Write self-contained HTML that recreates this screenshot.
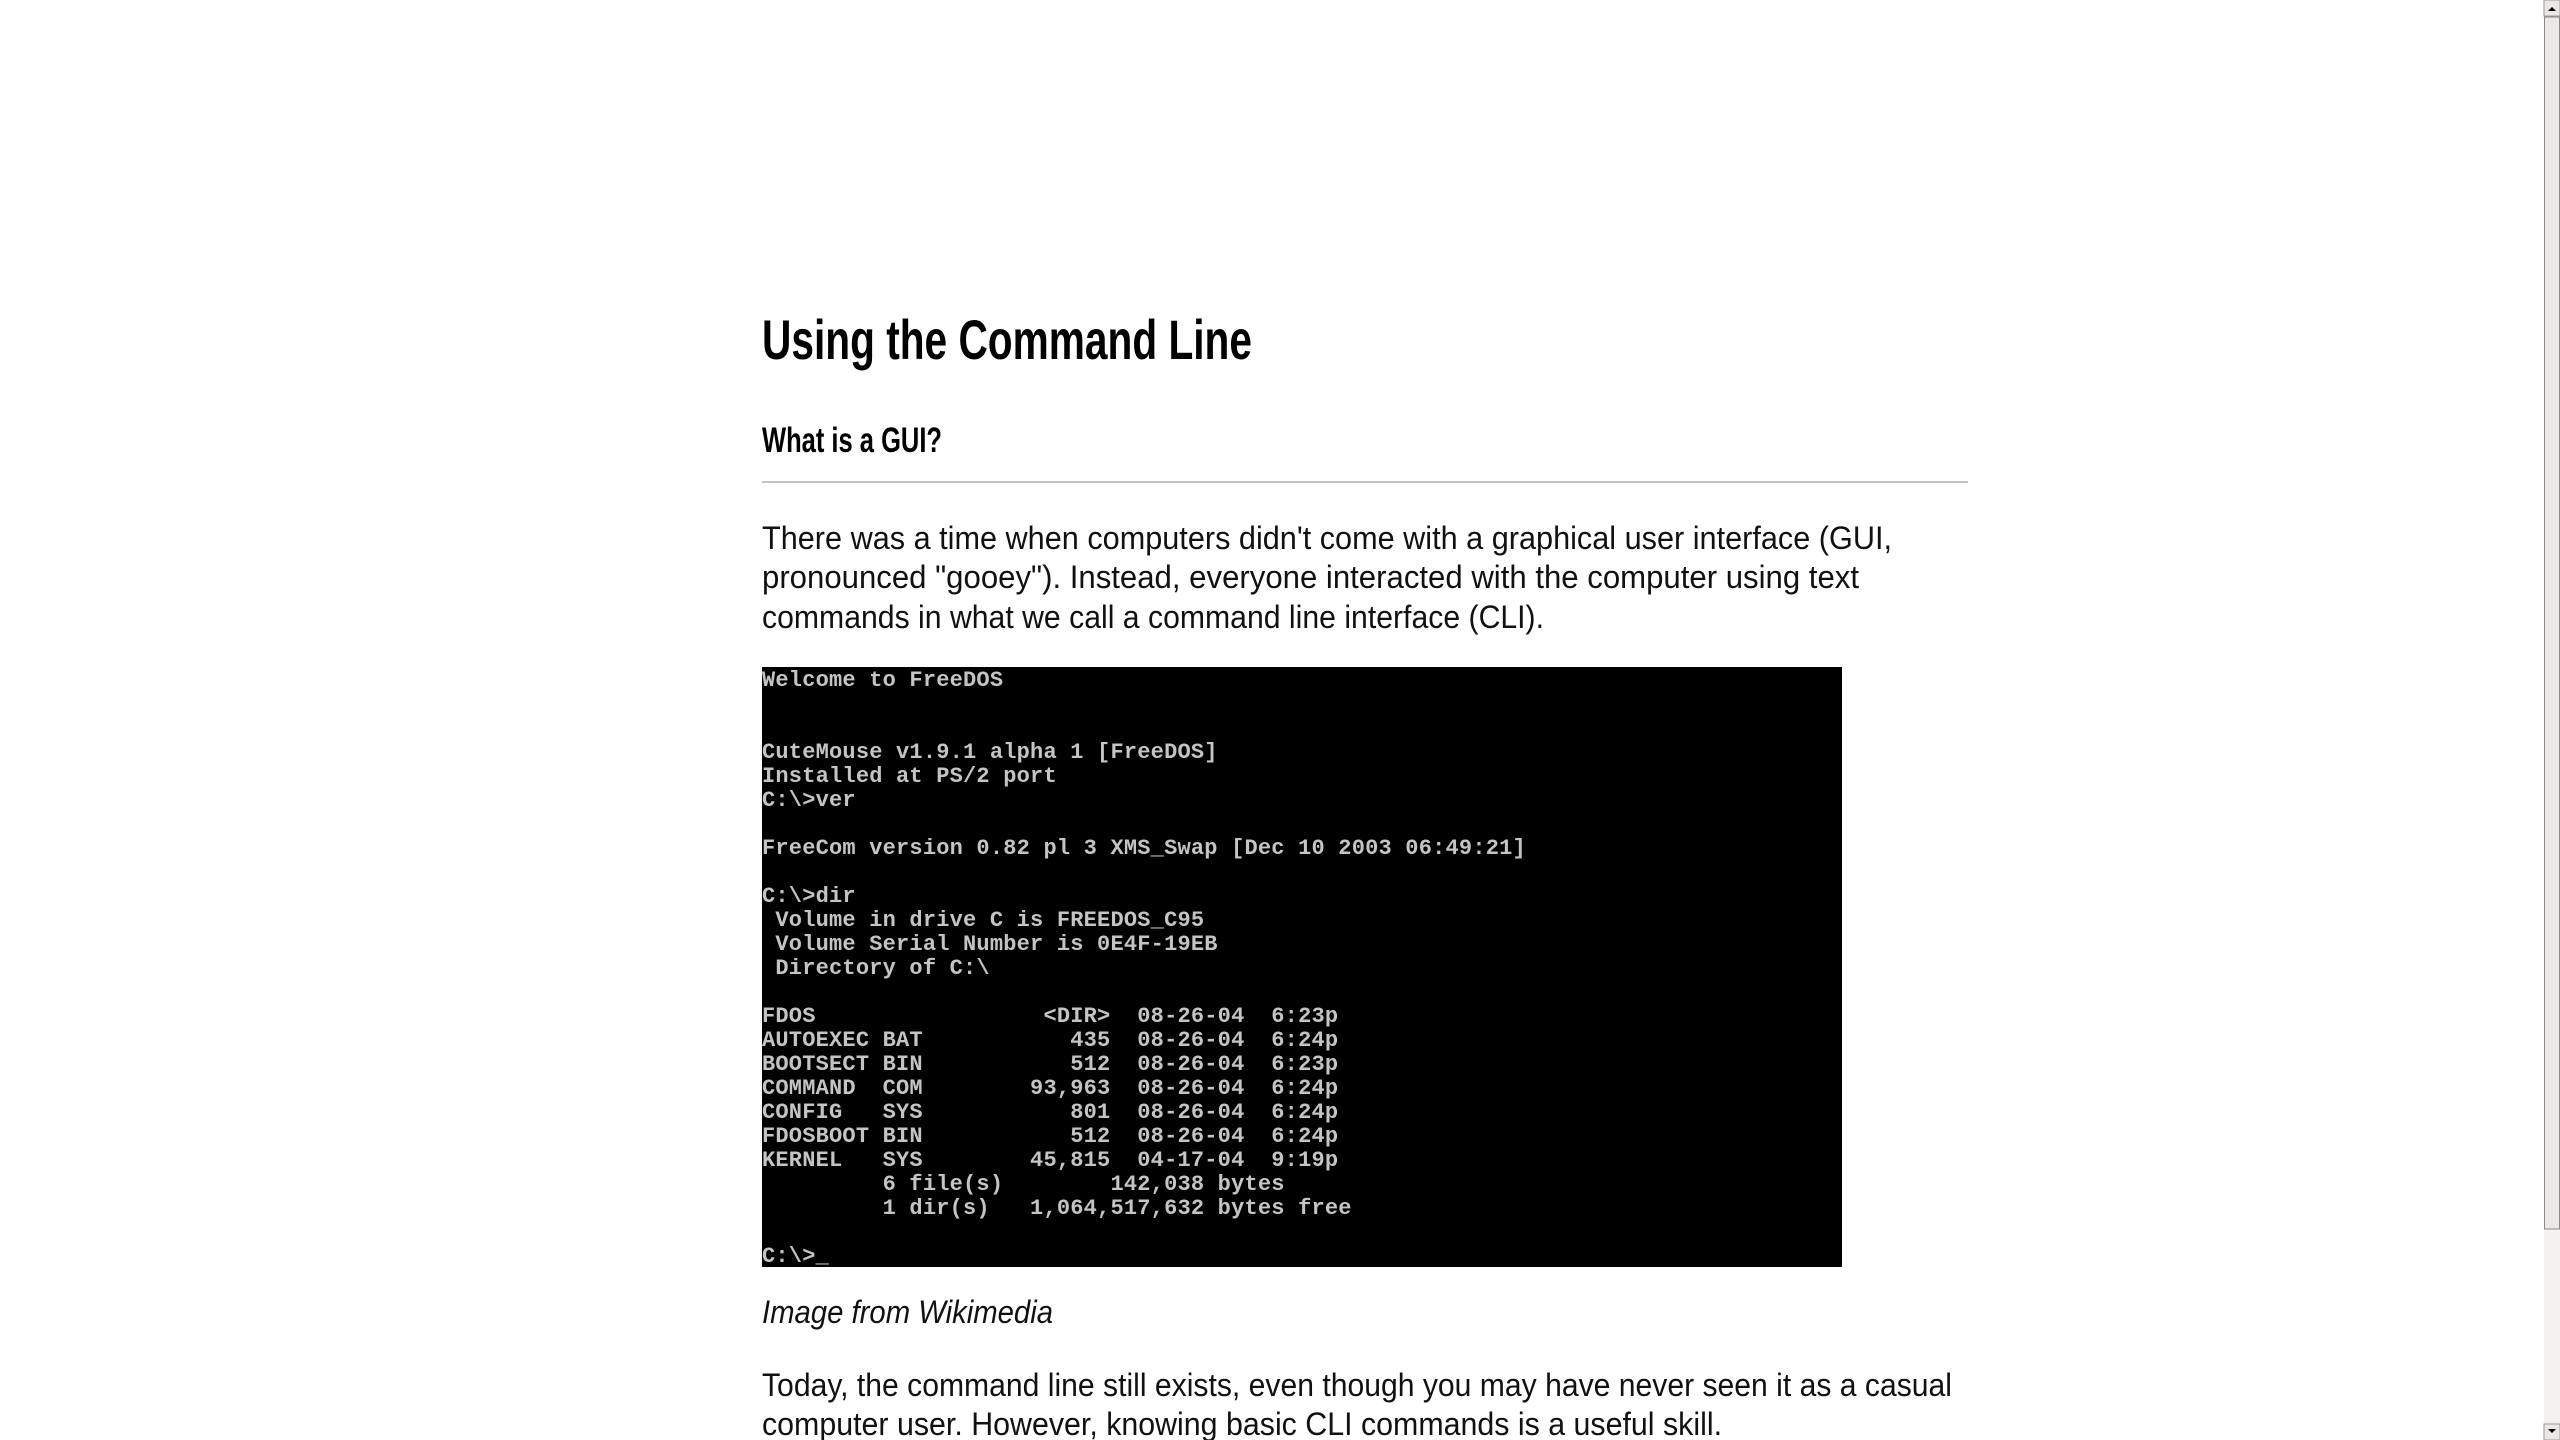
<!DOCTYPE html>
<html><head><meta charset="utf-8"><style>
html,body{margin:0;padding:0;width:2560px;height:1440px;overflow:hidden;background:#fff}
svg{position:absolute;left:0;top:0}
.h{font-family:"Liberation Sans",sans-serif;fill:#000;font-weight:bold}
.b{font-family:"Liberation Sans",sans-serif;font-size:32px;fill:#111}
.t text{font-family:"Liberation Mono",monospace;font-size:22px;fill:#c4c4c4;font-weight:bold;letter-spacing:0.2px}
</style></head><body>
<svg width="2560" height="1440" xmlns="http://www.w3.org/2000/svg">
<text class="h" x="762" y="359" font-size="56" textLength="490" lengthAdjust="spacingAndGlyphs">Using the Command Line</text>
<text class="h" x="762" y="452" font-size="35" textLength="180" lengthAdjust="spacingAndGlyphs">What is a GUI?</text>
<rect x="762" y="481" width="1206" height="2" fill="#c4c4c4"/>
<text class="b" x="762" y="549" textLength="1130" lengthAdjust="spacingAndGlyphs">There was a time when computers didn't come with a graphical user interface (GUI,</text>
<text class="b" x="762" y="588" textLength="1097" lengthAdjust="spacingAndGlyphs">pronounced "gooey"). Instead, everyone interacted with the computer using text</text>
<text class="b" x="762" y="628" textLength="782" lengthAdjust="spacingAndGlyphs">commands in what we call a command line interface (CLI).</text>
<rect x="762" y="667" width="1080" height="600" fill="#000"/>
<g class="t">
<text x="762" y="686">Welcome&#160;to&#160;FreeDOS</text>
<text x="762" y="758">CuteMouse&#160;v1.9.1&#160;alpha&#160;1&#160;[FreeDOS]</text>
<text x="762" y="782">Installed&#160;at&#160;PS/2&#160;port</text>
<text x="762" y="806">C:\&gt;ver</text>
<text x="762" y="854">FreeCom&#160;version&#160;0.82&#160;pl&#160;3&#160;XMS_Swap&#160;[Dec&#160;10&#160;2003&#160;06:49:21]</text>
<text x="762" y="902">C:\&gt;dir</text>
<text x="762" y="926">&#160;Volume&#160;in&#160;drive&#160;C&#160;is&#160;FREEDOS_C95</text>
<text x="762" y="950">&#160;Volume&#160;Serial&#160;Number&#160;is&#160;0E4F-19EB</text>
<text x="762" y="974">&#160;Directory&#160;of&#160;C:\</text>
<text x="762" y="1022">FDOS&#160;&#160;&#160;&#160;&#160;&#160;&#160;&#160;&#160;&#160;&#160;&#160;&#160;&#160;&#160;&#160;&#160;&lt;DIR&gt;&#160;&#160;08-26-04&#160;&#160;6:23p</text>
<text x="762" y="1046">AUTOEXEC&#160;BAT&#160;&#160;&#160;&#160;&#160;&#160;&#160;&#160;&#160;&#160;&#160;435&#160;&#160;08-26-04&#160;&#160;6:24p</text>
<text x="762" y="1070">BOOTSECT&#160;BIN&#160;&#160;&#160;&#160;&#160;&#160;&#160;&#160;&#160;&#160;&#160;512&#160;&#160;08-26-04&#160;&#160;6:23p</text>
<text x="762" y="1094">COMMAND&#160;&#160;COM&#160;&#160;&#160;&#160;&#160;&#160;&#160;&#160;93,963&#160;&#160;08-26-04&#160;&#160;6:24p</text>
<text x="762" y="1118">CONFIG&#160;&#160;&#160;SYS&#160;&#160;&#160;&#160;&#160;&#160;&#160;&#160;&#160;&#160;&#160;801&#160;&#160;08-26-04&#160;&#160;6:24p</text>
<text x="762" y="1142">FDOSBOOT&#160;BIN&#160;&#160;&#160;&#160;&#160;&#160;&#160;&#160;&#160;&#160;&#160;512&#160;&#160;08-26-04&#160;&#160;6:24p</text>
<text x="762" y="1166">KERNEL&#160;&#160;&#160;SYS&#160;&#160;&#160;&#160;&#160;&#160;&#160;&#160;45,815&#160;&#160;04-17-04&#160;&#160;9:19p</text>
<text x="762" y="1190">&#160;&#160;&#160;&#160;&#160;&#160;&#160;&#160;&#160;6&#160;file(s)&#160;&#160;&#160;&#160;&#160;&#160;&#160;&#160;142,038&#160;bytes</text>
<text x="762" y="1214">&#160;&#160;&#160;&#160;&#160;&#160;&#160;&#160;&#160;1&#160;dir(s)&#160;&#160;&#160;1,064,517,632&#160;bytes&#160;free</text>
<text x="762" y="1262">C:\&gt;_</text>
</g>
<text class="b" x="762" y="1323" font-style="italic" textLength="291" lengthAdjust="spacingAndGlyphs">Image from Wikimedia</text>
<text class="b" x="762" y="1396" textLength="1190" lengthAdjust="spacingAndGlyphs">Today, the command line still exists, even though you may have never seen it as a casual</text>
<text class="b" x="762" y="1435" textLength="960" lengthAdjust="spacingAndGlyphs">computer user. However, knowing basic CLI commands is a useful skill.</text>
<rect x="2544" y="0" width="16" height="1440" fill="#f4f2ee"/>
<rect x="2544" y="0" width="16" height="16" fill="#ece9e4" stroke="#999" stroke-width="1"/>
<path d="M2548 11 L2552 7 L2556 11 Z" fill="#000"/>
<rect x="2544.5" y="17" width="15" height="1212" fill="#ece9e4" stroke="#8a8a8a"/>
<rect x="2544" y="1424" width="16" height="16" fill="#ece9e4" stroke="#999" stroke-width="1"/>
<path d="M2548 1429 L2552 1433 L2556 1429 Z" fill="#000"/>
</svg>
</body></html>
